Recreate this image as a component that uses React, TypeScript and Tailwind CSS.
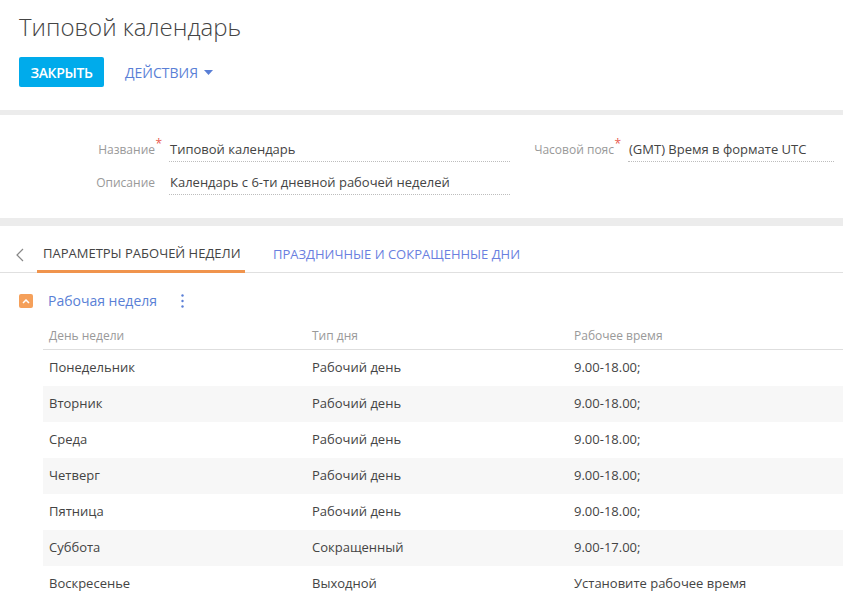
import React from 'react';

const rows = [
  { day: 'Понедельник', type: 'Рабочий день', time: '9.00-18.00;' },
  { day: 'Вторник', type: 'Рабочий день', time: '9.00-18.00;' },
  { day: 'Среда', type: 'Рабочий день', time: '9.00-18.00;' },
  { day: 'Четверг', type: 'Рабочий день', time: '9.00-18.00;' },
  { day: 'Пятница', type: 'Рабочий день', time: '9.00-18.00;' },
  { day: 'Суббота', type: 'Сокращенный', time: '9.00-17.00;' },
  { day: 'Воскресенье', type: 'Выходной', time: 'Установите рабочее время' },
];

const Field: React.FC<{ label: string; value: string; required?: boolean; labelW: string; valueW: string }> = ({
  label,
  value,
  required,
  labelW,
  valueW,
}) => (
  <div className="flex items-start h-[33px]">
    <div className={`${labelW} flex justify-end pr-[14px] pt-[6px] relative`}>
      <span className="text-[12px] leading-[18px] text-[#999]">{label}</span>
      {required && <span className="absolute right-[7px] top-[0px] text-[12px] text-[#e85a4f]">*</span>}
    </div>
    <div className={`${valueW} border-b border-dotted border-[#bdbdbd] h-[27px] flex items-end pb-[2px] pl-[1px] text-[13px] leading-[20px] text-[#444]`}>
      {value}
    </div>
  </div>
);

export default function App() {
  return (
    <div className="w-[843px] h-[600px] overflow-hidden bg-white" style={{ fontFamily: '"Open Sans", "Noto Sans", sans-serif' }}>
      {/* header */}
      <div className="px-[19px] pt-[11px] h-[110px]">
        <h1 className="text-[24px] font-light text-[#444] leading-[32px]">Типовой календарь</h1>
        <div className="flex items-center mt-[14px] gap-[21px]">
          <button className="h-[30px] w-[85px] rounded-[2px] bg-[#00abeb] text-white text-[14px] font-semibold tracking-tight">
            ЗАКРЫТЬ
          </button>
          <button className="flex items-center gap-[6px] text-[14px] text-[#5a7fd6]">
            ДЕЙСТВИЯ
            <svg width="9" height="5" viewBox="0 0 9 5">
              <path d="M0 0h9L4.5 5z" fill="#5a7fd6" />
            </svg>
          </button>
        </div>
      </div>
      <div className="h-[5px] bg-[#ececec]" />

      {/* form */}
      <div className="h-[103px] pt-[20px] flex">
        <div className="flex flex-col">
          <Field label="Название" value="Типовой календарь" required labelW="w-[169px]" valueW="w-[341px]" />
          <Field label="Описание" value="Календарь с 6-ти дневной рабочей неделей" labelW="w-[169px]" valueW="w-[341px]" />
        </div>
        <Field label="Часовой пояс" value="(GMT) Время в формате UTC" required labelW="w-[118px]" valueW="w-[206px]" />
      </div>
      <div className="h-[8px] bg-[#ececec]" />

      {/* tabs */}
      <div className="h-[47px] flex items-end border-b border-[#e0e0e0]">
        <div className="w-[37px] h-full flex items-center pl-[16px] pt-[11px]">
          <svg width="8" height="14" viewBox="0 0 8 14">
            <path d="M7 1L1 7l6 6" stroke="#888" strokeWidth="1.2" fill="none" />
          </svg>
        </div>
        <div className="h-full flex items-end">
          <div className="w-[208px] h-full border-b-[3px] border-[#f0944d] flex items-center pl-[6px] pt-[10px] -mb-px">
            <span className="text-[13px] text-[#444]">ПАРАМЕТРЫ РАБОЧЕЙ НЕДЕЛИ</span>
          </div>
          <div className="h-full flex items-center pl-[28px] pt-[12px]">
            <span className="text-[13px] text-[#6a7fe0]">ПРАЗДНИЧНЫЕ И СОКРАЩЕННЫЕ ДНИ</span>
          </div>
        </div>
      </div>

      {/* section */}
      <div className="pl-[19px] pt-[20px] h-[52px] flex items-start">
        <div className="w-[14px] h-[14px] rounded-[2px] bg-[#f5a05a] flex items-center justify-center mt-[1px]">
          <svg width="8" height="5" viewBox="0 0 8 5">
            <path d="M1 4l3-3 3 3" stroke="white" strokeWidth="1.5" fill="none" />
          </svg>
        </div>
        <span className="ml-[15px] text-[14px] text-[#5a7fd6] leading-[16px]">Рабочая неделя</span>
        <svg className="ml-[24px] mt-[1px]" width="3" height="14" viewBox="0 0 3 14">
          <circle cx="1.5" cy="1.5" r="1.2" fill="#5a7fd6" />
          <circle cx="1.5" cy="7" r="1.2" fill="#5a7fd6" />
          <circle cx="1.5" cy="12.5" r="1.2" fill="#5a7fd6" />
        </svg>
      </div>

      {/* table */}
      <div className="ml-[43px]">
        <div className="grid grid-cols-[263px_262px_1fr] h-[25px] border-b border-[#dedede] text-[12px] leading-[20px] pt-[1px] text-[#999]">
          <div className="pl-[6px]">День недели</div>
          <div className="pl-[6px]">Тип дня</div>
          <div className="pl-[6px]">Рабочее время</div>
        </div>
        {rows.map((r, i) => (
          <div
            key={r.day}
            className={`grid grid-cols-[263px_262px_1fr] h-[36px] items-center text-[13px] text-[#444] ${i % 2 === 1 ? 'bg-[#f7f7f7]' : ''}`}
          >
            <div className="pl-[6px]">{r.day}</div>
            <div className="pl-[6px]">{r.type}</div>
            <div className="pl-[6px]">{r.time}</div>
          </div>
        ))}
      </div>
    </div>
  );
}
